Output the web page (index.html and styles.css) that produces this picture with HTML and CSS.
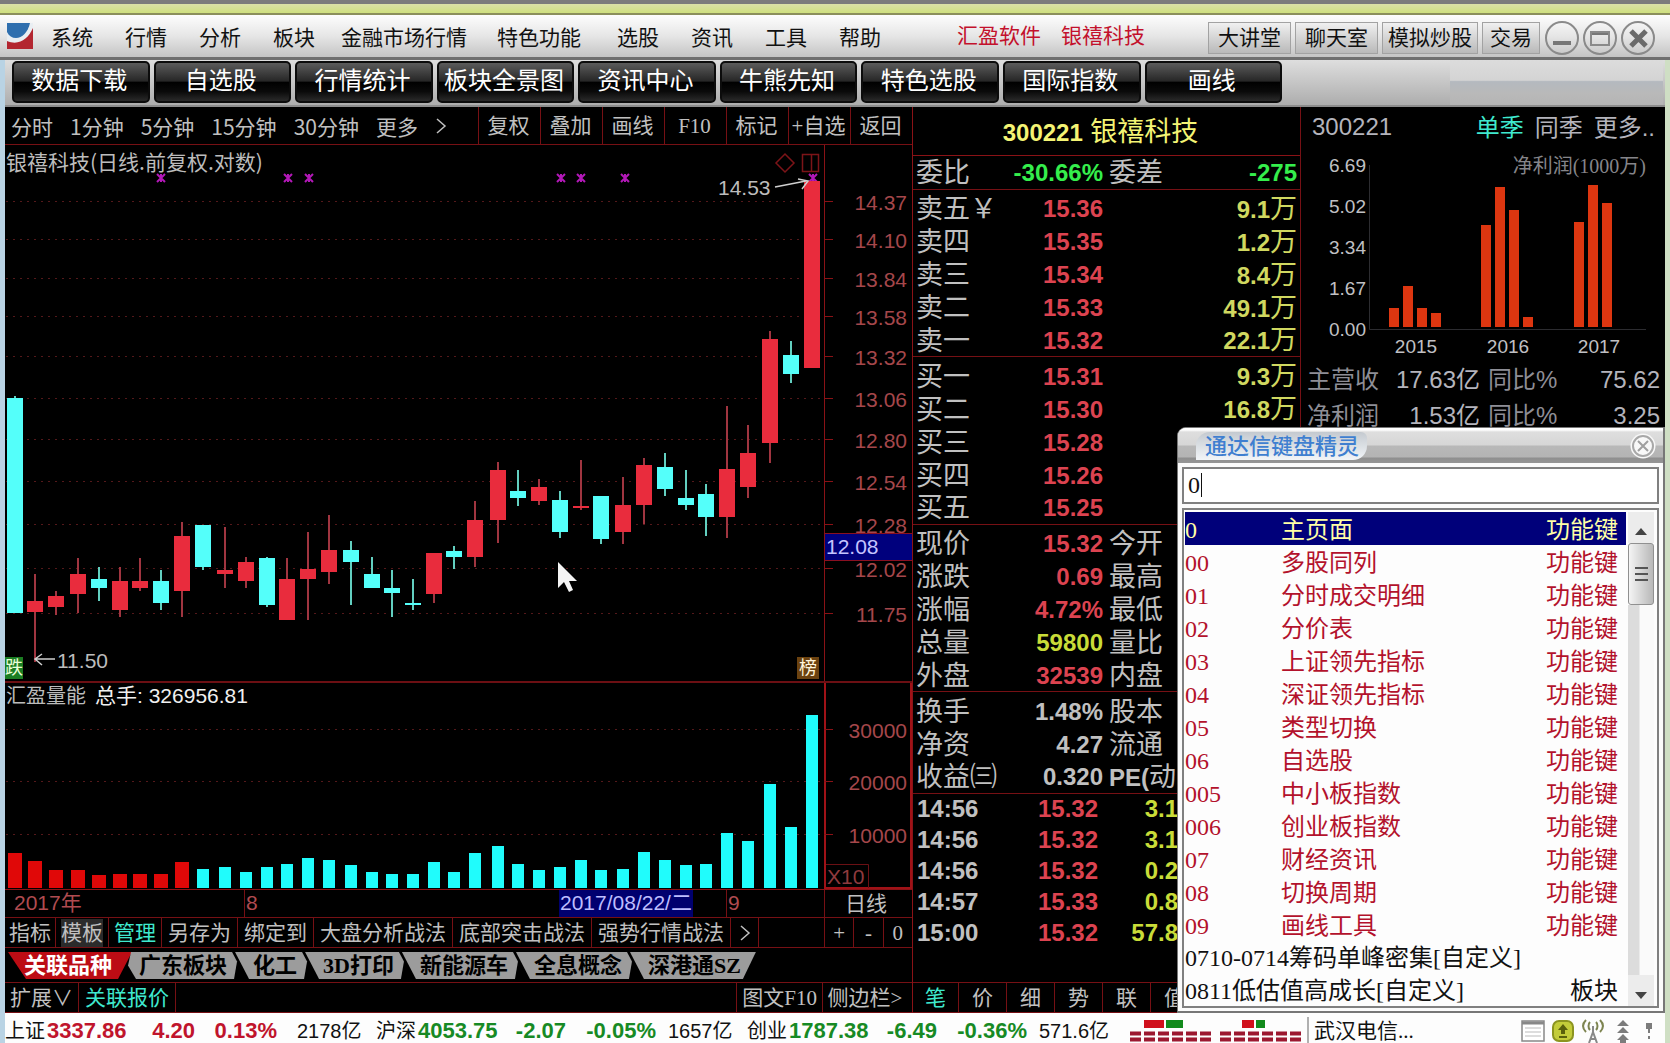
FILE: index.html
```html
<!DOCTYPE html>
<html lang="zh-CN">
<head>
<meta charset="utf-8">
<title>银禧科技 300221</title>
<link rel="stylesheet" href="styles.css">
</head>
<body>
<div class="app">
  <header class="menubar">
    <svg class="logo" viewBox="0 0 26 26" aria-hidden="true">
      <rect width="26" height="26" fill="#e9eef2"/>
      <path d="M0 0H23C21 9 15 15 9 15C5 15 2 13 0 9Z" fill="#2f6fae"/>
      <path d="M0 18C12 23 21 16 26 5V26H0Z" fill="#b32630"/>
    </svg>
    <nav class="menu">
      <button class="menu-item">系统</button>
      <button class="menu-item">行情</button>
      <button class="menu-item">分析</button>
      <button class="menu-item">板块</button>
      <button class="menu-item menu-long">金融市场行情</button>
      <button class="menu-item menu-mid">特色功能</button>
      <button class="menu-item">选股</button>
      <button class="menu-item">资讯</button>
      <button class="menu-item">工具</button>
      <button class="menu-item">帮助</button>
    </nav>
    <p class="app-title"><span>汇盈软件</span><span>银禧科技</span></p>
    <div class="menu-actions">
      <button class="chip">大讲堂</button>
      <button class="chip">聊天室</button>
      <button class="chip chip-tight">模拟炒股</button>
      <button class="chip chip-small">交易</button>
    </div>
    <div class="window-buttons">
      <button class="round" aria-label="最小化"><svg viewBox="0 0 36 36"><circle cx="18" cy="18" r="16"/><path d="M9 23H27" class="thick"/></svg></button>
      <button class="round" aria-label="最大化"><svg viewBox="0 0 36 36"><circle cx="18" cy="18" r="16"/><path d="M9 13H27" class="thick"/><rect x="9" y="12" width="18" height="13"/></svg></button>
      <button class="round" aria-label="关闭"><svg viewBox="0 0 36 36"><circle cx="18" cy="18" r="16"/><path d="M11 11L26 26M26 11L11 26" class="cross"/></svg></button>
    </div>
  </header>

  <nav class="shortcuts">
    <div class="shortcut-list">
      <button>数据下载</button><button>自选股</button><button>行情统计</button><button>板块全景图</button><button>资讯中心</button><button>牛熊先知</button><button>特色选股</button><button>国际指数</button><button>画线</button>
    </div>
    <div class="shortcut-end"></div>
  </nav>

  <main class="main">
    <section class="chart-col">
      <div class="toolbar">
        <div class="periods">
          <button>分时</button><button>1分钟</button><button>5分钟</button><button>15分钟</button><button>30分钟</button><button>更多</button>
          <button aria-label="下一页"><svg width="12" height="18" viewBox="0 0 12 18"><path d="M2 2L10 9L2 16" fill="none" stroke="currentColor" stroke-width="1.5"/></svg></button>
        </div>
        <div class="tools">
          <button>复权</button><button>叠加</button><button>画线</button><button>F10</button><button>标记</button><button>+自选</button><button>返回</button>
        </div>
      </div>

      <div class="panel price-panel">
        <svg class="plot price-plot" viewBox="5 145 819 536" preserveAspectRatio="xMinYMin meet">
          <g id="price-grid" class="grid"></g>
          <g id="signals" class="signals"></g>
          <g id="candles"></g>
          <text x="6" y="170" class="t-grey">银禧科技(日线.前复权.对数)</text>
          <path d="M785 154L794 163L785 172L776 163Z" class="mark"/>
          <path d="M802.5 154.5H818.5V171.5H802.5ZM811.5 154.5V171.5" class="mark"/>
          <text x="718" y="195" class="t-num t-grey">14.53</text>
          <path d="M775 187L806 181M798 179L808 181L802 189" class="pointer"/>
          <text x="57" y="668" class="t-num t-grey">11.50</text>
          <path d="M55 659H35M42 654L35 659L42 665" class="pointer"/>
          <rect x="5" y="657" width="18" height="22" fill="#1b7d22"/>
          <text x="5" y="674" class="t-tag" fill="#eaffd8">跌</text>
          <rect x="797" y="657" width="22" height="22" fill="#6b4210"/>
          <text x="799" y="674" class="t-tag" fill="#fff6dc">榜</text>
          <path d="M558 562V588L564 582L569 592L573 590L569 581L577 581Z" fill="#f4f4f4"/>
        </svg>
        <svg class="axis" viewBox="824 145 88 536">
          <path d="M824.5 145V681" stroke="#8a1216"/>
          <g id="price-axis"></g>
          <rect x="825" y="533" width="87" height="28" fill="#00007d"/>
          <path d="M825 533.5H912M825 560.5H912" stroke="#8a1020"/>
          <text x="826" y="554" class="t-num" fill="#c4c4ff">12.08</text>
        </svg>
      </div>

      <div class="panel volume-panel">
        <svg class="plot" viewBox="5 683 819 206" preserveAspectRatio="xMinYMin meet">
          <g id="volume-grid" class="grid"></g>
          <g id="volumes"></g>
          <text x="6" y="703" class="t-grey t-volume">汇盈量能</text>
          <text x="95" y="703" class="t-num" fill="#f0f0f0">总手: 326956.81</text>
        </svg>
        <svg class="axis" viewBox="824 683 88 206">
          <path d="M825 683V888H911V683" fill="none" stroke="#a01217" stroke-width="2"/>
          <g id="volume-axis"></g>
          <path d="M826 864.5H868.5V888" fill="none" stroke="#6a1014"/>
          <text x="827" y="884" class="t-num" fill="#8f3a3e">X10</text>
        </svg>
      </div>

      <div class="row dates">
        <span class="month year">2017年</span><span class="month august">8</span>
        <span class="date-now">2017/08/22/二</span><span class="date-gap"></span><span class="month september">9</span>
        <button class="axis-cell">日线</button>
      </div>

      <div class="row indicators">
        <button class="short">指标</button><button class="short"><span class="pressed">模板</span></button><button class="short on">管理</button><button>另存为</button><button>绑定到</button><button>大盘分析战法</button><button>底部突击战法</button><button>强势行情战法</button><button class="more" aria-label="更多"><svg width="12" height="18" viewBox="0 0 12 18"><path d="M2 2L10 9L2 16" fill="none" stroke="currentColor" stroke-width="1.5"/></svg></button>
        <div class="zoomers"><button>+</button><button>-</button><button>0</button></div>
      </div>

      <div class="row tabs">
        <button class="tab tab-active">关联品种</button><button class="tab tab-next">广东板块</button><button class="tab">化工</button><button class="tab">3D打印</button><button class="tab">新能源车</button><button class="tab">全息概念</button><button class="tab tab-last">深港通SZ</button>
      </div>

      <div class="row extend">
        <button>扩展∨</button><button class="on">关联报价</button>
        <div class="extend-right"><button>图文F10</button><button>侧边栏&gt;</button></div>
      </div>
    </section>

    <section class="quote-col">
      <h1 class="quote-title"><b>300221</b> 银禧科技</h1>
      <table class="quotes ratio">
        <tr><th>委比</th><td class="green">-30.66%</td><th>委差</th><td class="green">-275</td></tr>
      </table>
      <table class="quotes">
        <tr><th>卖五<i>￥</i></th><td class="red">15.36</td><th></th><td class="yellow">9.1<i>万</i></td></tr>
        <tr><th>卖四</th><td class="red">15.35</td><th></th><td class="yellow">1.2<i>万</i></td></tr>
        <tr><th>卖三</th><td class="red">15.34</td><th></th><td class="yellow">8.4<i>万</i></td></tr>
        <tr><th>卖二</th><td class="red">15.33</td><th></th><td class="yellow">49.1<i>万</i></td></tr>
        <tr><th>卖一</th><td class="red">15.32</td><th></th><td class="yellow">22.1<i>万</i></td></tr>
      </table>
      <table class="quotes">
        <tr><th>买一</th><td class="red">15.31</td><th></th><td class="yellow">9.3<i>万</i></td></tr>
        <tr><th>买二</th><td class="red">15.30</td><th></th><td class="yellow">16.8<i>万</i></td></tr>
        <tr><th>买三</th><td class="red">15.28</td><th></th><td></td></tr>
        <tr><th>买四</th><td class="red">15.26</td><th></th><td></td></tr>
        <tr><th>买五</th><td class="red">15.25</td><th></th><td></td></tr>
      </table>
      <table class="quotes">
        <tr><th>现价</th><td class="red">15.32</td><th>今开</th><td></td></tr>
        <tr><th>涨跌</th><td class="red">0.69</td><th>最高</th><td></td></tr>
        <tr><th>涨幅</th><td class="red">4.72%</td><th>最低</th><td></td></tr>
        <tr><th>总量</th><td class="lime">59800</td><th>量比</th><td></td></tr>
        <tr><th>外盘</th><td class="red">32539</td><th>内盘</th><td></td></tr>
      </table>
      <table class="quotes">
        <tr><th>换手</th><td>1.48%</td><th>股本</th><td></td></tr>
        <tr><th>净资</th><td>4.27</td><th>流通</th><td></td></tr>
        <tr><th>收益㈢</th><td>0.320</td><th class="pe">PE(<i>动</i></th><td></td></tr>
      </table>
      <table class="ticks">
        <tr><td>14:56</td><td class="red">15.32</td><td class="lime">3.1</td><td></td></tr>
        <tr><td>14:56</td><td class="red">15.32</td><td class="lime">3.1</td><td></td></tr>
        <tr><td>14:56</td><td class="red">15.32</td><td class="lime">0.2</td><td></td></tr>
        <tr><td>14:57</td><td class="red">15.33</td><td class="lime">0.8</td><td></td></tr>
        <tr><td>15:00</td><td class="red">15.32</td><td class="lime">57.8</td><td></td></tr>
      </table>
      <div class="quote-tabs">
        <button class="on">笔</button><button>价</button><button>细</button><button>势</button><button>联</button><button>值</button>
      </div>
    </section>

    <aside class="finance-col">
      <div class="finance-head">
        <span class="code">300221</span>
        <button class="on">单季</button><button>同季</button><button>更多..</button>
      </div>
      <svg class="finance-chart" viewBox="1301 148 364 212" preserveAspectRatio="xMinYMin meet">
        <path d="M1369.5 165V329.5H1646" fill="none" stroke="#2c2c30"/>
        <g id="finance-bars" fill="#dd3610"></g>
        <g class="fin-text" text-anchor="end">
          <text x="1366" y="172">6.69</text><text x="1366" y="213">5.02</text><text x="1366" y="254">3.34</text><text x="1366" y="295">1.67</text><text x="1366" y="336">0.00</text>
        </g>
        <text x="1646" y="173" class="fin-title" text-anchor="end">净利润(1000万)</text>
        <g class="fin-text" text-anchor="middle">
          <text x="1416" y="353">2015</text><text x="1508" y="353">2016</text><text x="1599" y="353">2017</text>
        </g>
      </svg>
      <table class="finance-table">
        <tr><th>主营收</th><td>17.63亿</td><th>同比%</th><td>75.62</td></tr>
        <tr><th>净利润</th><td>1.53亿</td><th>同比%</th><td>3.25</td></tr>
      </table>
    </aside>

    <section class="wizard" role="dialog" aria-label="通达信键盘精灵">
      <header class="wizard-head">
        <h2>通达信键盘精灵</h2>
        <button aria-label="关闭"><svg width="28" height="28" viewBox="0 0 28 28"><circle cx="14" cy="14" r="12.5" fill="#f8f8f8"/><circle cx="14" cy="14" r="10" fill="none" stroke="#a8a8a8" stroke-width="2"/><path d="M9 9L19 19M19 9L9 19" stroke="#a0a0a0" stroke-width="2"/></svg></button>
      </header>
      <div class="wizard-field"><input type="text" value="0" aria-label="代码"><span class="caret"></span></div>
      <div class="wizard-list">
        <table>
          <tr class="selected"><td>0</td><td>主页面</td><td>功能键</td></tr>
          <tr><td>00</td><td>多股同列</td><td>功能键</td></tr>
          <tr><td>01</td><td>分时成交明细</td><td>功能键</td></tr>
          <tr><td>02</td><td>分价表</td><td>功能键</td></tr>
          <tr><td>03</td><td>上证领先指标</td><td>功能键</td></tr>
          <tr><td>04</td><td>深证领先指标</td><td>功能键</td></tr>
          <tr><td>05</td><td>类型切换</td><td>功能键</td></tr>
          <tr><td>06</td><td>自选股</td><td>功能键</td></tr>
          <tr><td>005</td><td>中小板指数</td><td>功能键</td></tr>
          <tr><td>006</td><td>创业板指数</td><td>功能键</td></tr>
          <tr><td>07</td><td>财经资讯</td><td>功能键</td></tr>
          <tr><td>08</td><td>切换周期</td><td>功能键</td></tr>
          <tr><td>09</td><td>画线工具</td><td>功能键</td></tr>
          <tr class="custom"><td colspan="2">0710-0714筹码单峰密集[自定义]</td><td></td></tr>
          <tr class="custom"><td colspan="2">0811低估值高成长[自定义]</td><td>板块</td></tr>
        </table>
        <div class="scroll">
          <button aria-label="向上"><svg width="12" height="8" viewBox="0 0 12 8"><path d="M0 7L6 0L12 7Z" fill="#444"/></svg></button>
          <div class="thumb"><span></span><span></span><span></span></div>
          <div class="track"></div>
          <button aria-label="向下"><svg width="12" height="8" viewBox="0 0 12 8"><path d="M0 1L6 8L12 1Z" fill="#444"/></svg></button>
        </div>
      </div>
    </section>
  </main>

  <footer class="status">
    <div class="index up"><span>上证</span><b class="price">3337.86</b><b class="change">4.20</b><b class="pct">0.13%</b><span class="amount">2178亿</span></div>
    <div class="index down"><span>沪深</span><b class="price">4053.75</b><b class="change">-2.07</b><b class="pct">-0.05%</b><span class="amount">1657亿</span></div>
    <div class="index down"><span>创业</span><b class="price">1787.38</b><b class="change">-6.49</b><b class="pct">-0.36%</b><span class="amount">571.6亿</span></div>
    <svg class="meters" width="172" height="24" viewBox="0 0 172 24" aria-hidden="true">
      <path d="M14 1H34V9H14ZM112 1H124V9H112Z" fill="#d0101c"/>
      <path d="M36 1H53V9H36ZM126 1H135V9H126Z" fill="#128a1c"/>
      <path d="M0 14.5H82M90 14.5H172M0 20.5H82M90 20.5H172" stroke="#9c1830" stroke-width="4" stroke-dasharray="11 3"/>
    </svg>
    <span class="server">武汉电信...</span>
    <div class="tray">
      <svg width="24" height="24" viewBox="0 0 24 24"><path d="M1 2H23V22H1Z" fill="#fff" stroke="#888" stroke-width="1.5"/><path d="M1 4H23" stroke="#888" stroke-width="3"/><path d="M4 9H20M4 13H20M4 17H20" stroke="#bbb"/></svg>
      <svg width="24" height="24" viewBox="0 0 24 24"><rect x="2" y="2" width="20" height="20" rx="6" fill="#c3cc3a" stroke="#8c9420" stroke-width="2"/><path d="M12 5L17 11H14V15H10V11H7Z" fill="#59600c"/><path d="M8 18H16" stroke="#59600c" stroke-width="2"/></svg>
      <svg width="24" height="24" viewBox="0 0 24 24" fill="none" stroke="#7d8450" stroke-width="2"><path d="M5 1C1 5 1 9 5 13M9 3C7 5 7 9 9 11M19 1C23 5 23 9 19 13M15 3C17 5 17 9 15 11"/><path d="M12 7V13M12 13L8 24M12 13L16 24M9 20H15" stroke="#888"/></svg>
      <svg width="24" height="24" viewBox="0 0 24 24" fill="#7c7c7c"><path d="M12 1L18 7H6ZM12 8L18 14H6ZM12 15L18 21H6ZM9 21H15V24H9Z"/></svg>
      <svg width="16" height="24" viewBox="0 0 16 24" fill="#7c7c7c"><path d="M5 4H11V10H9V14H7V10H5ZM7 17H9V20H7Z"/></svg>
    </div>
  </footer>
</div>
<script src="charts.js"></script>
</body>
</html>
```

FILE: styles.css
```css
* { box-sizing: border-box; }

:root {
  --line: #761014;
  --grey: #c0c0c0;
  --cyan: #3fe9cf;
  --cjk: "Noto Sans CJK SC", sans-serif;
}

body {
  margin: 0;
  background: linear-gradient(90deg, #b9d3e4 0, #b9d3e4 50%, #cfdfc4 50%);
  font-family: "Liberation Serif", var(--cjk);
  font-size: 21px;
  line-height: 28px;
}

button {
  margin: 0;
  padding: 0;
  border: 0;
  background: none;
  color: inherit;
  font: inherit;
  white-space: nowrap;
}

table { border-collapse: collapse; }
th { font-weight: 400; text-align: left; }
th, td { padding: 0; }
i { font-style: normal; font-weight: 400; }

.app {
  display: flex;
  flex-direction: column;
  min-height: 100vh;
  padding: 0 5px;
  border-top: 4px solid #7c7b7c;
}

/* menu bar */
.menubar {
  display: flex;
  align-items: center;
  height: 56px;
  margin: 0 -5px;
  padding: 14px 14px 0 7px;
  border-bottom: 3px solid #6f6f6f;
  background: linear-gradient(#dbe0a8 0, #cfe07f 9px, #8b8f5c 9px, #8b8f5c 11px, #fdfdfd 11px, #e6e6e6 32px, #c4c4c4 100%);
  color: #111;
}

.logo { width: 26px; height: 26px; margin-bottom: 4px; }
.menu { display: flex; margin-left: 2px; }
.menu-item { width: 74px; }
.menu-mid { width: 124px; }
.menu-long { width: 146px; }
.app-title { display: flex; gap: 20px; margin: 0 0 4px 60px; color: #c3112c; }
.menu-actions { display: flex; gap: 4px; margin-left: auto; }

.chip {
  height: 32px;
  padding: 0 9px;
  border: 1px solid #a2a2a2;
  background: linear-gradient(#f0f0f0, #b9b9b9);
}
.chip-tight { padding: 0 5px; }
.chip-small { padding: 0 7px; }

.window-buttons { display: flex; gap: 2px; margin-left: 4px; }
.round { width: 36px; height: 36px; }
.round svg { display: block; fill: none; stroke: #8a8a8a; stroke-width: 2; }
.round .thick { stroke-width: 4; stroke: #777; }
.round .cross { stroke-width: 5; stroke: #6a6a6a; }

/* shortcut buttons */
.shortcuts {
  display: flex;
  height: 47px;
  padding: 1px 2px 4px 7px;
  border-bottom: 2px solid #8c8c8c;
  background: linear-gradient(#dedede, #adadad);
}
.shortcut-list { display: flex; gap: 4px; width: 1270px; }
.shortcut-list button {
  flex: 1;
  height: 42px;
  padding: 0 3px 2px 0;
  border: 2px solid #0c0c0c;
  border-radius: 5px;
  background: linear-gradient(#5b5b5b 0, #262626 48%, #000 50%, #0a0a0a 75%, #2a2a2a 100%);
  color: #fff;
  font-size: 24px;
  line-height: 32px;
}
.shortcut-end {
  flex: 1;
  margin: -1px 0 -4px 168px;
  background: linear-gradient(#dcdcdc 0, #d4d4d4 45%, #b4b9bf 48%, #b9b9b9 75%, #b4b4b4 100%);
}

/* workspace */
.main {
  position: relative;
  display: grid;
  grid-template-columns: minmax(0, 1fr) 388px 364px;
  flex: 1;
  background: #000;
  color: var(--grey);
}

.chart-col {
  display: flex;
  flex-direction: column;
  border-right: 1px solid #8a1216;
}

.toolbar {
  display: flex;
  justify-content: space-between;
  height: 38px;
  border-bottom: 1px solid var(--line);
}
.periods { display: flex; align-items: center; gap: 17px; padding-left: 6px; font-family: var(--cjk); }
.periods svg { display: block; }
.tools { display: flex; }
.tools button { width: 62px; padding-right: 2px; border-left: 1px solid var(--line); }

.panel { display: flex; }
.plot { flex: 1; min-width: 0; height: 536px; }
.axis { flex: none; width: 88px; height: 536px; }
.price-panel { border-bottom: 2px solid #6c0f13; }
.volume-panel { height: 207px; border-bottom: 1px solid #8a1216; }
.volume-panel svg { height: 206px; }

svg text { font-family: var(--cjk); font-size: 21px; }
svg .t-num { font-family: "Liberation Sans", var(--cjk); }
svg .t-grey { fill: #bcbcbc; }
svg .t-tag { font-size: 18px; }
svg .t-volume { font-size: 20px; }
.grid path { stroke: #54181a; stroke-dasharray: 2 5; }
.signals path { stroke: #b318b8; stroke-width: 2; }
.mark { fill: none; stroke: #7c1418; stroke-width: 1.5; }
.pointer { fill: none; stroke: #cfcfcf; stroke-width: 1.5; }
.axis-label { fill: #a5474b; }

.row { display: flex; border-bottom: 1px solid var(--line); }
.row button { display: flex; align-items: center; justify-content: center; }

.dates { height: 28px; color: #b04b50; font-family: "Liberation Sans", var(--cjk); }
.month { line-height: 26px; }
.year { width: 239px; padding-left: 9px; }
.august { border-left: 1px solid var(--line); padding-left: 1px; }
.date-now {
  margin-left: auto;
  width: 134px;
  padding-left: 1px;
  background: #00006f;
  color: #bdbdff;
  line-height: 26px;
  white-space: nowrap;
}
.date-gap { width: 33px; }
.september { width: 98px; padding-left: 1px; border-left: 1px solid var(--line); }
.row .axis-cell { width: 88px; padding-right: 5px; border-left: 1px solid var(--line); color: var(--grey); }

.indicators { height: 30px; }
.indicators > button { padding: 0 6px; border-right: 1px solid var(--line); }
.indicators > .short { padding: 0 5px; }
.indicators > .short:first-child { padding: 0 4px; }
.pressed { background: #2b2b2b; }
.on { color: var(--cyan); }
.indicators .more { width: 28px; }
.zoomers { display: flex; margin-left: auto; width: 88px; border-left: 1px solid var(--line); }
.zoomers button { flex: 1; }
.zoomers button + button { border-left: 1px solid var(--line); }

.tabs { height: 35px; padding: 4px 0 0 3px; }
.row .tab {
  height: 27px;
  margin-left: -8px;
  padding: 0 15px 0 19px;
  background: #9c9c9c;
  color: #000;
  font-size: 22px;
  font-weight: 700;
  clip-path: polygon(1px 0, calc(100% - 10px) 0, calc(100% - 5px) 35%, calc(100% - 8px) 100%, 15px 100%);
}
.row .tab-active {
  margin-left: 0;
  padding: 0 20px 0 16px;
  background: #bc0c14;
  color: #fff;
  clip-path: polygon(0 0, 100% 0, calc(100% - 14px) 100%, 18px 100%);
}
.row .tab-next {
  padding-left: 15px;
  clip-path: polygon(7px 0, calc(100% - 10px) 0, calc(100% - 5px) 35%, calc(100% - 8px) 100%, 12px 100%, 4px 50%);
}
.row .tab-last { clip-path: polygon(1px 0, 100% 0, calc(100% - 13px) 100%, 15px 100%); }

.extend { height: 30px; }
.extend button { padding: 0 5px; border-right: 1px solid var(--line); }
.extend .on { padding: 0 6px; }
.extend-right { display: flex; margin-left: auto; border-left: 1px solid var(--line); }
.extend-right button:last-child { width: 89px; padding-right: 10px; border-right: 0; }

/* quote column */
.quote-col {
  display: flex;
  flex-direction: column;
  border-right: 1px solid var(--line);
  font-family: "Liberation Sans", var(--cjk);
  font-size: 24px;
}
.quote-title {
  height: 49px;
  margin: 0;
  padding-right: 12px;
  border-bottom: 1px solid #8a1216;
  color: #f4f474;
  font-size: 27px;
  font-weight: 400;
  line-height: 50px;
  text-align: center;
}
.quote-title b { font-size: 24px; }

.quotes, .ticks { width: 100%; table-layout: fixed; }
.quotes { margin-top: 2px; border-bottom: 1px solid var(--line); }
.ratio { margin-top: 0; }
.quotes td, .ticks td { font-weight: 700; text-align: right; white-space: nowrap; }
.quotes tr { height: 33px; }
.quotes th, .quotes td { padding-top: 2px; }
.quotes th { font-size: 27px; padding-left: 3px; white-space: nowrap; }
.quotes .pe { font-size: 24px; font-weight: 700; }
.quotes i { font-size: 27px; }
.quotes th:nth-child(1) { width: 100px; }
.quotes td:nth-child(2) { width: 90px; }
.quotes th:nth-child(3) { width: 70px; padding-left: 6px; }
.quotes td:nth-child(4) { padding-right: 3px; }
.ticks tr { height: 31px; }
.ticks td:nth-child(1) { width: 90px; padding-left: 4px; text-align: left; }
.ticks td:nth-child(2) { width: 95px; }
.ticks td:nth-child(3) { width: 80px; }
.red { color: #dc4350; }
.green { color: #35ee4c; }
.yellow { color: #d0d860; }
.lime { color: #c9dc38; }

.quote-tabs {
  display: flex;
  height: 31px;
  margin-top: auto;
  border-top: 1px solid var(--line);
  border-bottom: 1px solid var(--line);
  font-size: 21px;
}
.quote-tabs button { width: 48px; border-right: 1px solid var(--line); }
.quote-tabs button:first-child { width: 46px; }

/* finance column */
.finance-col { font-family: "Liberation Sans", var(--cjk); font-size: 24px; color: #b4b4bc; }
.finance-head { display: flex; gap: 11px; height: 41px; padding: 0 10px 0 11px; }
.code { margin-right: auto; line-height: 40px; }
.finance-chart { display: block; width: 100%; height: 212px; }
.fin-text text { font-family: "Liberation Sans", sans-serif; font-size: 19px; fill: #c0c0c4; }
svg .fin-title { font-family: "Liberation Serif", var(--cjk); font-size: 20px; fill: #85858a; }
.finance-table { width: 100%; margin-top: 2px; table-layout: fixed; }
.finance-table tr { height: 36px; }
.finance-table th { padding-left: 6px; color: #8e8e96; white-space: nowrap; }
.finance-table th:nth-child(1) { width: 89px; }
.finance-table td { text-align: right; white-space: nowrap; }
.finance-table td:nth-child(2) { width: 90px; }
.finance-table th:nth-child(3) { width: 90px; padding-left: 8px; }
.finance-table td:nth-child(4) { padding-right: 5px; }

/* keyboard wizard */
.wizard {
  position: absolute;
  top: 320px;
  right: 0;
  bottom: 0;
  display: flex;
  flex-direction: column;
  gap: 4px;
  width: 488px;
  padding-bottom: 3px;
  border: 1px solid #777;
  border-right-width: 2px;
  border-bottom-width: 2px;
  border-top-left-radius: 9px;
  background: #fbfbfb;
  color: #b3122c;
  font-size: 24px;
}
.wizard-head {
  display: flex;
  align-items: center;
  justify-content: space-between;
  height: 35px;
  padding: 0 6px 0 18px;
  border-top-left-radius: 8px;
  background: linear-gradient(#fff 0, #fff 2px, #dedede 4px, #d6d6d6 17px, #b8b8b8 18px, #b4b4b4 29px, #8f8f8f 30px, #959595 100%);
}
.wizard-head h2 {
  margin: 0;
  padding: 0 8px 4px 9px;
  border-radius: 14px 6px 14px 0;
  background: linear-gradient(#c4cad0, #f2f5f8);
  color: #3f7fd0;
  font: 500 22px/24px var(--cjk);
}
.wizard-head svg { display: block; }
.wizard-field { position: relative; margin: 0 4px; }
.wizard-field input {
  display: block;
  width: 100%;
  height: 37px;
  padding: 0 4px;
  border: 2px solid #808080;
  border-radius: 0;
  background: #fff;
  color: #111;
  font: 24px/32px "Liberation Serif", serif;
}
.caret { position: absolute; left: 19px; top: 6px; width: 1px; height: 24px; background: #111; }
.wizard-list {
  display: flex;
  flex: 1;
  margin: 0 4px;
  padding: 2px 2px 0 1px;
  border: 2px solid #808080;
  background: #fdfdfd;
}
.wizard-list table { flex: 1; table-layout: fixed; height: 100%; }
.wizard-list td { height: 32px; padding-top: 4px; line-height: 28px; white-space: nowrap; }
.wizard-list td:nth-child(1) { width: 96px; }
.wizard-list td:last-child { padding-right: 8px; text-align: right; }
.selected { background: #00007a; color: #ffffa6; }
.custom { color: #111; }
.scroll { display: flex; flex-direction: column; width: 29px; padding: 0 1px 0 2px; }
.scroll button { height: 31px; background: #ececec; }
.thumb {
  display: flex;
  flex-direction: column;
  align-items: center;
  justify-content: center;
  gap: 4px;
  height: 62px;
  border: 1px solid #909090;
  border-radius: 3px;
  background: linear-gradient(90deg, #f4f4f4, #b8b8b8);
}
.thumb span { width: 13px; height: 2px; background: #555; }
.track { flex: 1; background: linear-gradient(90deg, #dcdcdc 0, #dcdcdc 11px, #fafafa 12px); }

/* status bar */
.status {
  display: flex;
  align-items: center;
  height: 30px;
  padding-top: 5px;
  background: #fdfdfd;
  color: #111;
  font-family: "Liberation Sans", var(--cjk);
  font-size: 20px;
  white-space: nowrap;
}
.index { display: flex; width: 371px; }
.index b { font-size: 22px; }
.index .price { width: 82px; padding-left: 2px; }
.index .change { width: 68px; text-align: right; }
.index .pct { width: 90px; text-align: right; }
.index .amount { margin-left: 12px; }
.index:nth-child(1) .pct { width: 82px; }
.index:nth-child(1) .amount { margin-left: 20px; }
.up b { color: #c0142c; }
.down b { color: #178a24; }
.meters { margin-left: 12px; }
.server { margin-left: 5px; padding-left: 5px; border-left: 2px solid #b0b0b0; font-family: "Liberation Serif", var(--cjk); font-size: 21px; }
.tray { display: flex; gap: 6px; margin-left: auto; padding-right: 8px; }
```

FILE: charts.js
```js
const NS = "http://www.w3.org/2000/svg";

function add(parent, name, attrs, text) {
  const el = document.createElementNS(NS, name);
  for (const key in attrs) el.setAttribute(key, attrs[key]);
  if (text) el.textContent = text;
  document.getElementById(parent).appendChild(el);
}

// centre, direction, wick top, wick bottom, body top, body bottom, volume top
const days = [
  [15, -1, 396, 613, 398, 613, 853], [35, 1, 574, 662, 601, 612, 861],
  [56, 1, 591, 615, 596, 607, 870], [78, 1, 558, 613, 574, 594, 870],
  [99, -1, 567, 601, 579, 588, 875], [120, 1, 567, 617, 581, 610, 874],
  [140, 1, 558, 591, 581, 588, 874], [161, -1, 570, 610, 581, 603, 874],
  [182, 1, 522, 617, 536, 591, 862], [203, -1, 525, 570, 525, 567, 869],
  [225, 1, 527, 588, 570, 574, 867], [246, 1, 557, 588, 562, 581, 872],
  [267, -1, 557, 607, 558, 605, 867], [287, 1, 558, 620, 579, 620, 864],
  [308, 1, 532, 620, 569, 579, 858], [329, 1, 515, 584, 550, 572, 860],
  [351, -1, 541, 605, 550, 562, 865], [372, -1, 557, 588, 574, 588, 872],
  [392, -1, 570, 617, 588, 593, 874], [413, -1, 579, 610, 603, 605, 874],
  [434, 1, 553, 603, 553, 594, 862], [454, -1, 546, 569, 551, 557, 872],
  [475, 1, 501, 567, 520, 557, 853], [498, 1, 462, 543, 470, 520, 846],
  [518, -1, 470, 506, 491, 498, 864], [539, 1, 479, 505, 487, 501, 870],
  [560, -1, 491, 538, 500, 532, 867], [581, 1, 460, 510, 506, 508, 860],
  [601, -1, 496, 544, 496, 539, 870], [623, 1, 477, 544, 505, 532, 869],
  [644, 1, 458, 524, 465, 505, 852], [665, -1, 453, 496, 467, 489, 860],
  [686, -1, 470, 510, 498, 505, 865], [706, -1, 484, 536, 494, 517, 864],
  [727, 1, 406, 538, 469, 517, 833], [748, 1, 425, 498, 453, 487, 841],
  [770, 1, 331, 463, 339, 443, 784], [791, -1, 341, 383, 355, 374, 827],
  [812, 1, 181, 368, 181, 368, 715]
];

days.forEach(([x, dir, high, low, top, bottom, vol], i) => {
  const up = dir > 0;
  add("candles", "rect", { x: x - 1, y: high, width: 2, height: low - high, fill: up ? "#a03540" : "#62cfc0" });
  add("candles", "rect", { x: x - 8, y: top, width: 16, height: bottom - top, fill: up ? "#e92c3d" : "#54fffa" });
  const w = i < 9 ? 14 : 12;
  add("volumes", "rect", { x: x - w / 2, y: vol, width: w, height: 888 - vol, fill: i < 9 ? "#e00808" : "#20fcfc" });
});

[["14.37", 202], ["14.10", 240], ["13.84", 279], ["13.58", 317], ["13.32", 357], ["13.06", 399],
 ["12.80", 440], ["12.54", 482], ["12.28", 525], ["12.02", 569], ["11.75", 614]].forEach(([label, y]) => {
  add("price-grid", "path", { d: `M6 ${y - 0.5}H824` });
  add("price-axis", "path", { d: `M824 ${y - 0.5}H833`, stroke: "#8a1216" });
  add("price-axis", "text", { x: 907, y: y + 8, "text-anchor": "end", class: "t-num axis-label" }, label);
});

[["30000", 730], ["20000", 782], ["10000", 835]].forEach(([label, y]) => {
  add("volume-grid", "path", { d: `M6 ${y - 0.5}H824` });
  add("volume-axis", "path", { d: `M824 ${y - 0.5}H833`, stroke: "#8a1216" });
  add("volume-axis", "text", { x: 907, y: y + 8, "text-anchor": "end", class: "t-num axis-label" }, label);
});

[161, 288, 309, 561, 581, 625, 813].forEach(x => {
  add("signals", "path", { d: `M${x - 4} 174L${x + 4} 182M${x + 4} 174L${x - 4} 182M${x} 174V182` });
});

[[1389, 308], [1403, 286], [1417, 308], [1431, 313], [1481, 225], [1495, 187], [1509, 210],
 [1523, 317], [1574, 222], [1588, 185], [1602, 203]].forEach(([x, y]) => {
  add("finance-bars", "rect", { x, y, width: 10, height: 327 - y });
});
```
